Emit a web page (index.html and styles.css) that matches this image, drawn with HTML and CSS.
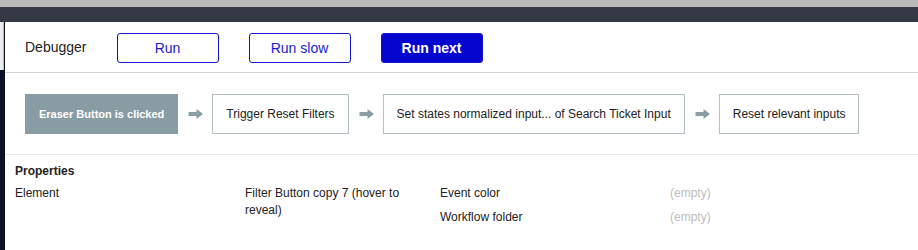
FILE: index.html
```html
<!DOCTYPE html>
<html>
<head>
<meta charset="utf-8">
<link rel="stylesheet" href="styles.css">
</head>
<body>
<div class="topbar"></div>
<div class="darkbar"></div>
<div class="main">
  <div class="side"><div class="side-top"></div></div>
  <div class="panel">
    <div class="header">
      <span class="title">Debugger</span>
      <button class="btn">Run</button>
      <button class="btn">Run slow</button>
      <button class="btn primary">Run next</button>
    </div>
    <div class="flow">
      <div class="step active">Eraser Button is clicked</div>
      <svg class="arrow" viewBox="0 0 15 10" width="15" height="10"><path d="M0.5 3H8.5V0L15 5L8.5 10V7H0.5Z" fill="#8b9ea5"/></svg>
      <div class="step">Trigger Reset Filters</div>
      <svg class="arrow" viewBox="0 0 15 10" width="15" height="10"><path d="M0.5 3H8.5V0L15 5L8.5 10V7H0.5Z" fill="#8b9ea5"/></svg>
      <div class="step">Set states normalized input... of Search Ticket Input</div>
      <svg class="arrow" viewBox="0 0 15 10" width="15" height="10"><path d="M0.5 3H8.5V0L15 5L8.5 10V7H0.5Z" fill="#8b9ea5"/></svg>
      <div class="step">Reset relevant inputs</div>
    </div>
    <div class="props">
      <div class="props-title">Properties</div>
      <div class="props-body">
        <div class="group">
          <div class="row">
            <div class="label">Element</div>
            <div class="value">Filter Button copy 7 (hover to reveal)</div>
          </div>
        </div>
        <div class="group">
          <div class="row">
            <div class="label">Event color</div>
            <div class="value empty">(empty)</div>
          </div>
          <div class="row">
            <div class="label">Workflow folder</div>
            <div class="value empty">(empty)</div>
          </div>
        </div>
      </div>
    </div>
  </div>
</div>
</body>
</html>
```

FILE: styles.css
```css
* { box-sizing: border-box; }
html, body { margin: 0; padding: 0; }
body {
  width: 918px;
  height: 250px;
  overflow: hidden;
  display: flex;
  flex-direction: column;
  font-family: "Liberation Sans", Arial, sans-serif;
  color: #222;
  background: #fff;
}
.topbar { height: 7px; background: #b9b9b9; flex: none; }
.darkbar { height: 15px; background: #353945; flex: none; }
.main { flex: 1; display: flex; min-height: 0; }
.side {
  width: 5px;
  flex: none;
  background: #0b1224;
}
.side-top {
  height: 48px;
  background: #ececec;
  border-right: 1px solid #b8b8b8;
  width: 4px;
}
.panel { flex: 1; display: flex; flex-direction: column; min-width: 0; }
.header {
  height: 51px;
  display: flex;
  align-items: center;
  padding: 0 20px;
  border-bottom: 1px solid #d2d2d2;
  gap: 30px;
}
.title { font-size: 14px; color: #222; }
.btn {
  width: 102px;
  height: 30px;
  border: 1px solid #1414d0;
  border-radius: 3px;
  background: #fff;
  color: #1a1ad0;
  font-family: "Liberation Sans", Arial, sans-serif;
  font-size: 14px;
  padding: 0;
  margin-top: 1px;
}
.btn.primary {
  background: #0505d0;
  color: #fff;
  font-weight: 600;
}
.flow {
  height: 82px;
  display: flex;
  align-items: flex-start;
  padding: 21px 20px 0;
  border-bottom: 1px solid #e6e6e6;
}
.step {
  height: 40px;
  line-height: 38px;
  padding: 0 13px;
  border: 1px solid #b5c0c4;
  font-size: 12px;
  color: #222;
  white-space: nowrap;
  background: #fff;
}
.step.active {
  background: #889ca4;
  border-color: #889ca4;
  color: #fff;
  font-weight: bold;
  font-size: 11px;
}
.arrow { margin: 15px 9px 0 10px; flex: none; }
.props { padding: 9px 10px 0; font-size: 12px; }
.props-title { font-weight: bold; line-height: 15px; color: #222; }
.props-body { display: flex; margin-top: 6px; }
.group { width: 425px; display: flex; flex-direction: column; gap: 7px; }
.row { display: flex; line-height: 17px; }
.label { width: 230px; flex: none; color: #222; }
.value { width: 180px; color: #222; }
.value.empty { color: #bdbdbd; }
```
